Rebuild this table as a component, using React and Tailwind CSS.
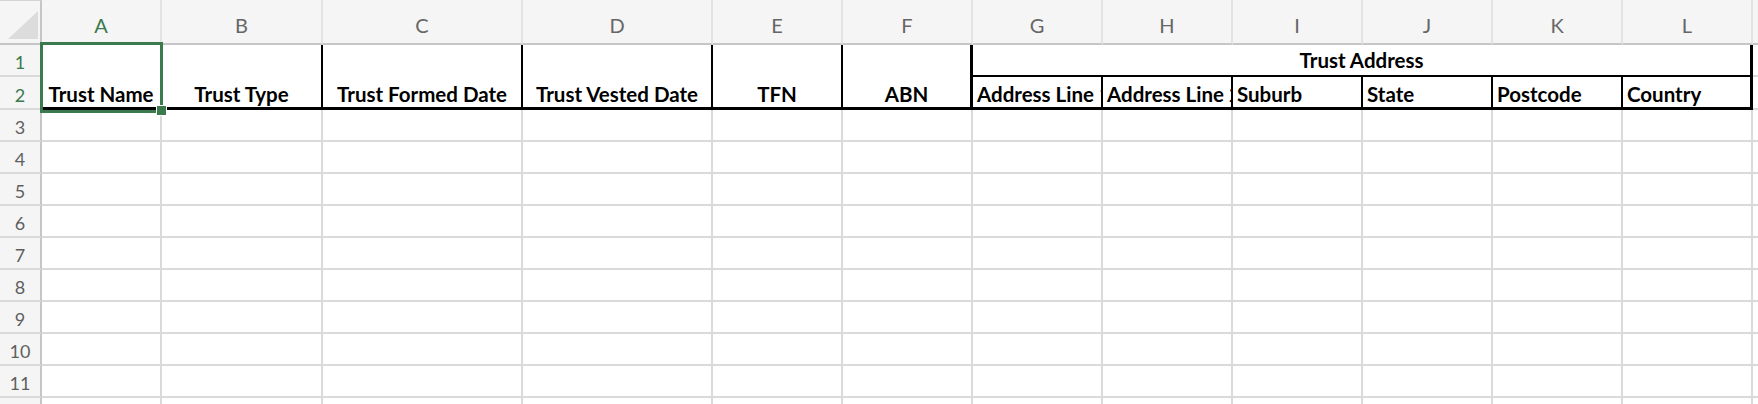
const COLS = ['A', 'B', 'C', 'D', 'E', 'F', 'G', 'H', 'I', 'J', 'K', 'L'];
const BODY_ROWS = [3, 4, 5, 6, 7, 8, 9, 10, 11, 12];

const gridLine = 'border-r-2 border-b-2 border-[#dadada]';

function ColHeader({ letter }) {
  const active = letter === 'A';
  return (
    <div
      className={`flex items-end justify-center pb-[8px] bg-[#f5f5f5] border-r-2 border-r-[#e3e3e3] border-b-2 border-b-[#c6c6c6] text-[20px] leading-none ${
        active ? 'text-[#3a7a4c]' : 'text-[#666666]'
      }`}
    >
      {letter}
    </div>
  );
}

function RowHeader({ n }) {
  const active = n === 1 || n === 2;
  return (
    <div
      className={`flex items-end justify-center pb-[4px] bg-[#f5f5f5] border-r-2 border-r-[#c6c6c6] border-b-2 border-b-[#dadada] text-[18px] leading-none ${
        active ? 'text-[#3a7a4c]' : 'text-[#5f5f5f]'
      }`}
    >
      {n < 12 ? n : ''}
    </div>
  );
}

// A1:F2 are merged over both header rows, text bottom-centred
function MergedHeading({ children, last }) {
  return (
    <div
      className={`row-span-2 flex items-end justify-center pb-[3px] border-b-[3px] border-black font-bold text-[20.5px] leading-none text-black whitespace-nowrap overflow-hidden ${
        last ? 'border-r-[3px]' : 'border-r-2'
      }`}
    >
      {children}
    </div>
  );
}

function SubHeading({ children, last }) {
  return (
    <div
      className={`flex items-end pl-[4px] pb-[3px] border-b-[3px] border-black font-bold text-[20.5px] leading-none text-black whitespace-nowrap overflow-hidden ${
        last ? 'border-r-[3px]' : 'border-r-2'
      }`}
    >
      {children}
    </div>
  );
}

export default function App() {
  return (
    <div className="relative w-[1758px] h-[404px] overflow-hidden bg-white font-['Lato',sans-serif]">
      <div className="grid grid-cols-[42px_120px_161px_200px_190px_130px_130px_130px_130px_130px_130px_130px_130px_5px] grid-rows-[45px_32px_33px_32px_32px_32px_32px_32px_32px_32px_32px_32px_32px]">
        {/* corner */}
        <div className="relative bg-[#f5f5f5] border-r-2 border-r-[#c6c6c6] border-b-2 border-b-[#c6c6c6] border-t border-t-[#d4d4d4]">
          <svg className="absolute left-[8px] top-[10px]" width="30" height="28" viewBox="0 0 30 28">
            <polygon points="0,28 30,28 30,0" fill="#dcdcdc" />
          </svg>
        </div>
        {COLS.map((c) => (
          <ColHeader key={c} letter={c} />
        ))}
        <div className="bg-[#f5f5f5] border-b-2 border-b-[#c6c6c6]" />

        {/* rows 1-2 */}
        <RowHeader n={1} />
        <MergedHeading>Trust Name</MergedHeading>
        <MergedHeading>Trust Type</MergedHeading>
        <MergedHeading>Trust Formed Date</MergedHeading>
        <MergedHeading>Trust Vested Date</MergedHeading>
        <MergedHeading>TFN</MergedHeading>
        <MergedHeading last>ABN</MergedHeading>
        <div className="col-span-6 flex items-end justify-center pb-[5px] border-b-2 border-r-[3px] border-black font-bold text-[20.5px] leading-none text-black">
          Trust Address
        </div>
        <div className="border-b-2 border-[#dadada]" />

        <RowHeader n={2} />
        <SubHeading>Address Line 1</SubHeading>
        <SubHeading>Address Line 2</SubHeading>
        <SubHeading>Suburb</SubHeading>
        <SubHeading>State</SubHeading>
        <SubHeading>Postcode</SubHeading>
        <SubHeading last>Country</SubHeading>
        <div className="border-b-2 border-[#dadada]" />

        {/* empty body */}
        {BODY_ROWS.map((r) => (
          <div key={r} className="contents">
            <RowHeader n={r} />
            {COLS.map((c) => (
              <div key={c} className={gridLine} />
            ))}
            <div className="border-b-2 border-[#dadada]" />
          </div>
        ))}
      </div>

      {/* active cell A1:A2 selection + fill handle */}
      <div className="absolute left-[40px] top-[42px] w-[123px] h-[71px] border-[3px] border-[#3a7a4c] pointer-events-none" />
      <div className="absolute left-[156px] top-[105px] w-[11px] h-[11px] bg-[#3a7a4c] border border-white pointer-events-none" />
    </div>
  );
}
